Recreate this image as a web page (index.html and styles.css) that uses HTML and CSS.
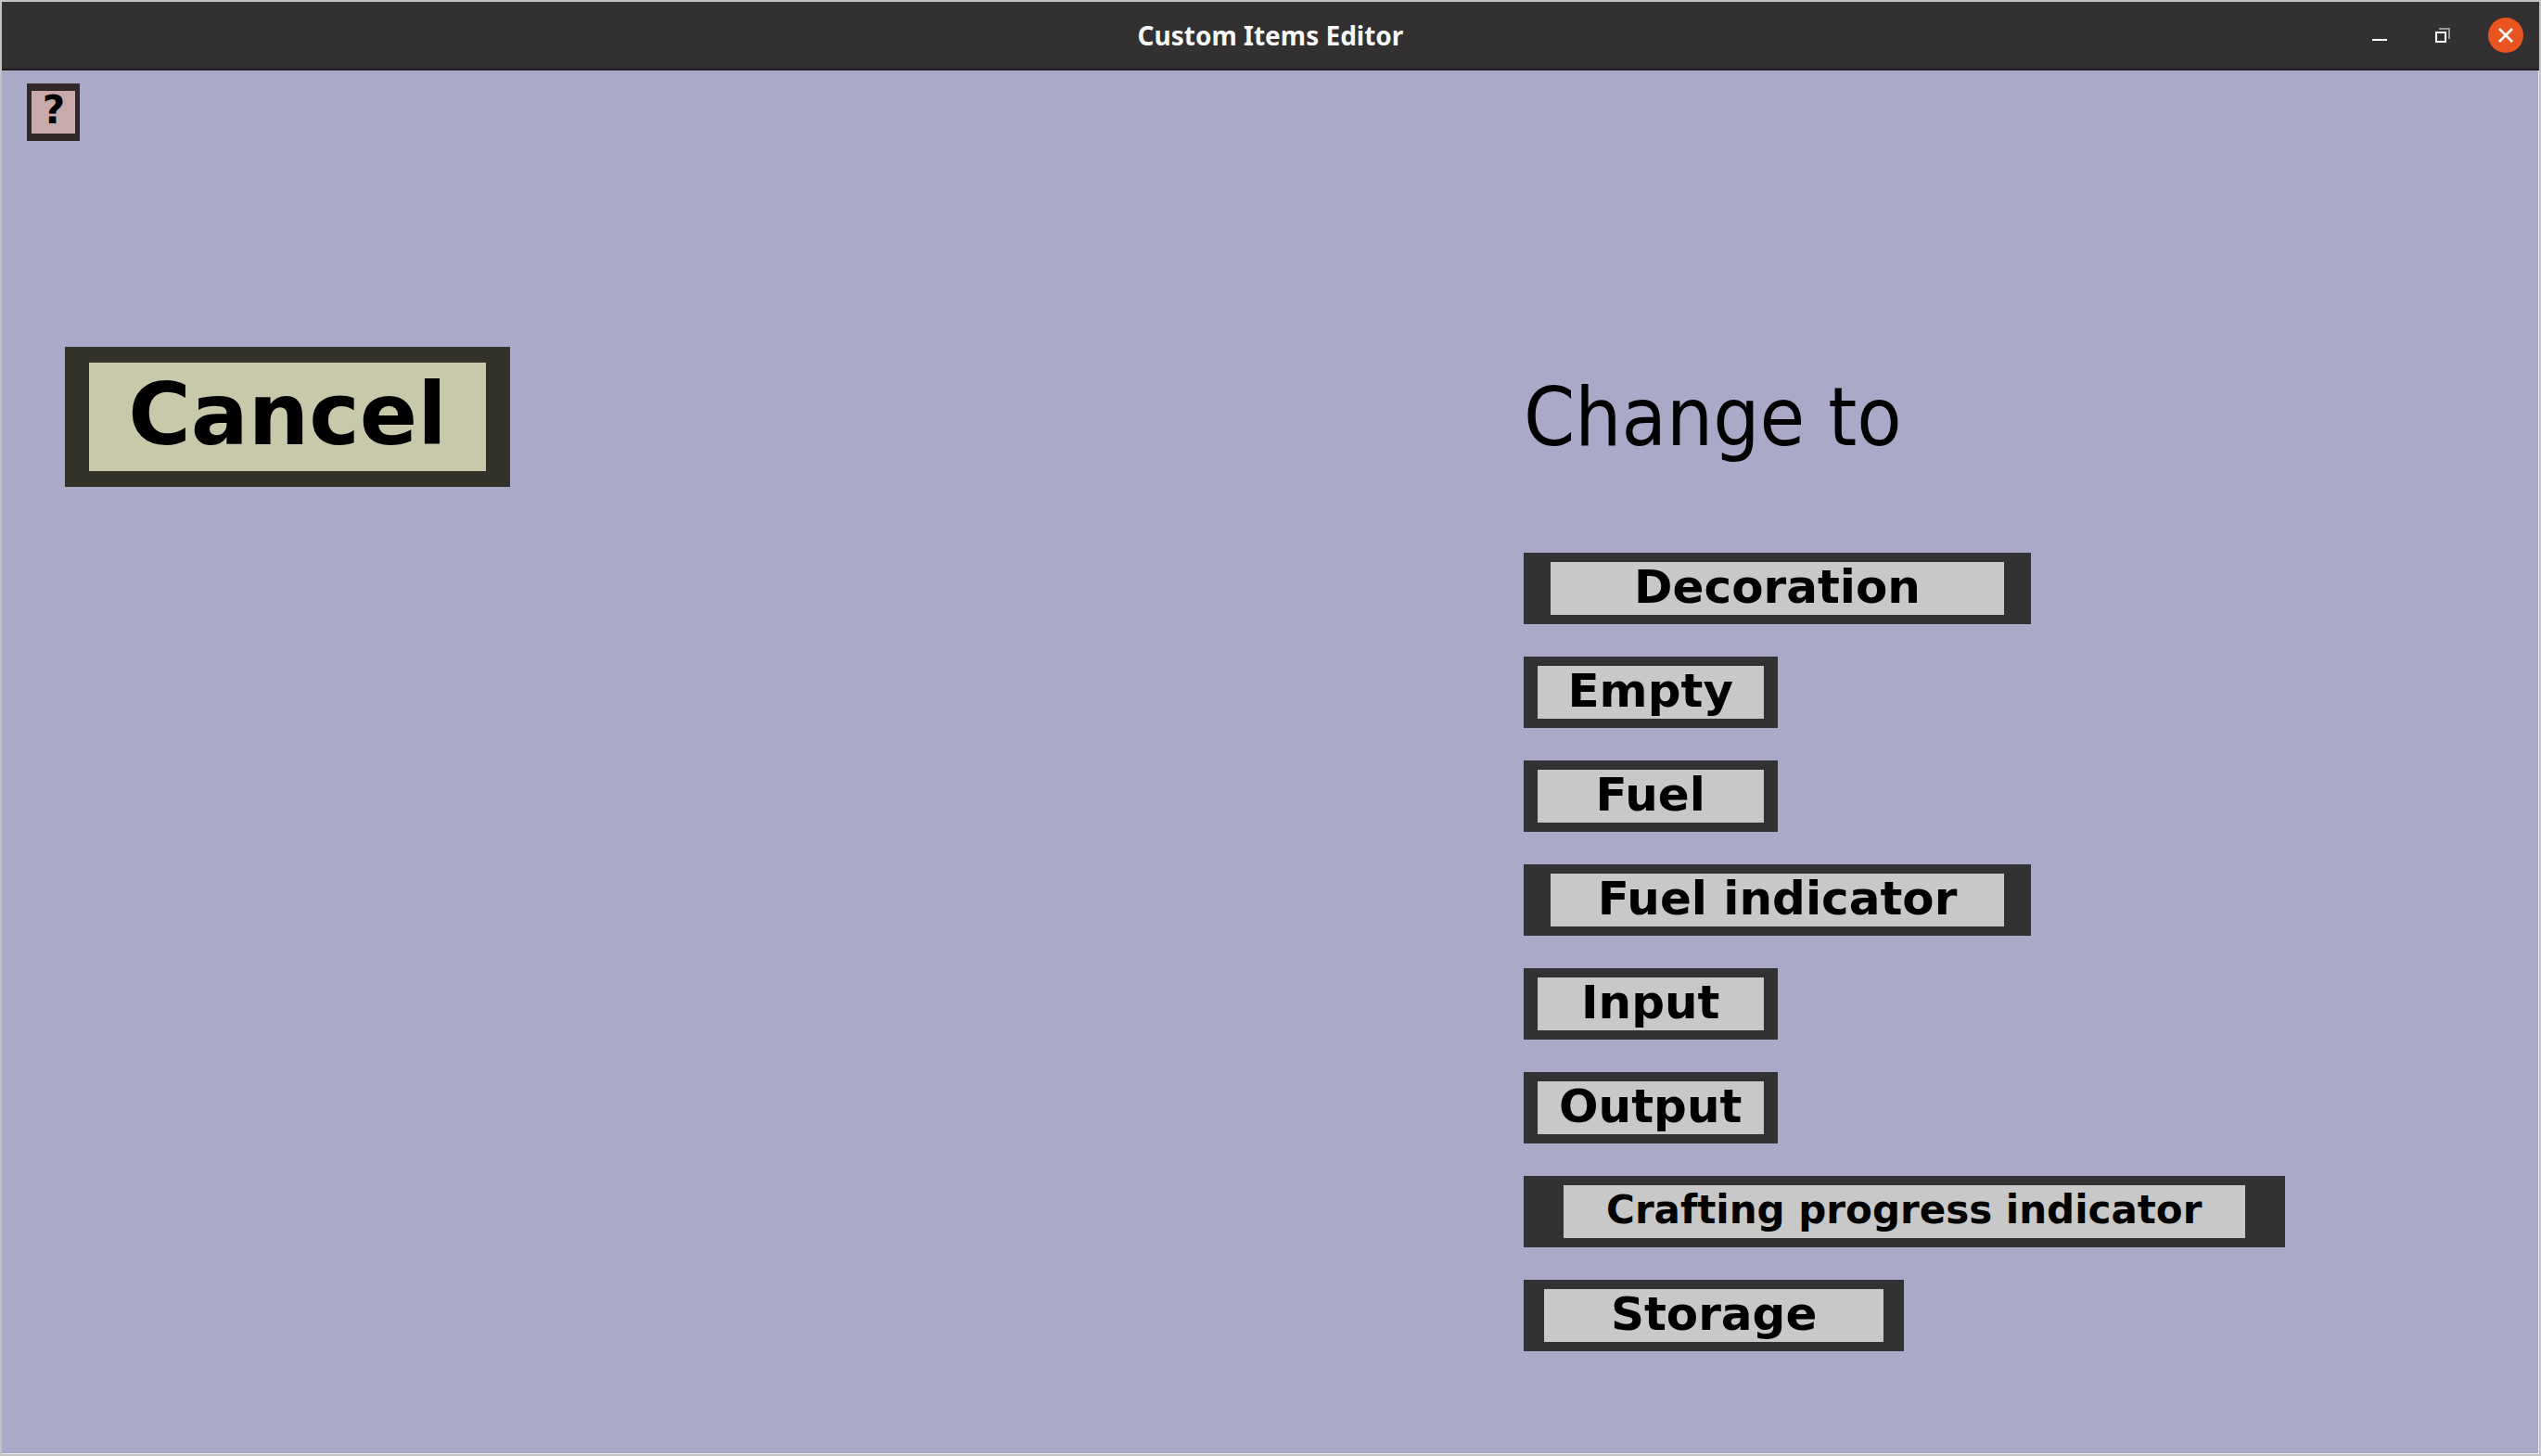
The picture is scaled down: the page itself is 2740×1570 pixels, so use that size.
FILE: index.html
```html
<!DOCTYPE html>
<html lang="en">
<head>
<meta charset="utf-8">
<title>Custom Items Editor</title>
<link rel="stylesheet" href="styles.css">
</head>
<body>
<div class="window">
  <header class="titlebar">
    <h1 class="title">Custom Items Editor</h1>
    <div class="controls">
      <button class="control" type="button" aria-label="Minimize">
        <svg viewBox="0 0 38 38"><path d="M11 23h16v2H11z" fill="#fff"/></svg>
      </button>
      <button class="control" type="button" aria-label="Restore">
        <svg viewBox="0 0 38 38"><path d="M15 11h12v12h-2V13H15z" fill="#989797"/><path d="M12 16h10v10H12z" fill="none" stroke="#fff" stroke-width="2"/></svg>
      </button>
      <button class="control" type="button" aria-label="Close">
        <svg viewBox="0 0 38 38"><circle cx="19" cy="19" r="19" fill="#e95420"/><path d="M12 12l14 14M26 12L12 26" fill="none" stroke="#fff" stroke-width="2.6"/></svg>
      </button>
    </div>
  </header>
  <main class="content">
    <button class="button help" type="button">?</button>
    <div class="menu">
      <button class="button cancel" type="button">Cancel</button>
      <section class="change">
        <h2 class="heading">Change to</h2>
        <div class="options">
          <button class="button option medium" type="button">Decoration</button>
          <button class="button option tiny" type="button">Empty</button>
          <button class="button option tiny" type="button">Fuel</button>
          <button class="button option medium" type="button">Fuel indicator</button>
          <button class="button option tiny" type="button">Input</button>
          <button class="button option tiny" type="button">Output</button>
          <button class="button option large" type="button">Crafting progress indicator</button>
          <button class="button option small" type="button">Storage</button>
        </div>
      </section>
    </div>
  </main>
</div>
</body>
</html>
```
FILE: styles.css
```css
* {
  box-sizing: border-box;
}

body {
  margin: 0;
  font-family: "DejaVu Sans", sans-serif;
  color: #000;
}

.window {
  display: flex;
  flex-direction: column;
  min-height: 100vh;
  border: 2px solid #c4c4c4;
}

.titlebar {
  display: grid;
  grid-template-columns: 1fr auto 1fr;
  align-items: center;
  height: 74px;
  padding: 0 17px;
  background: #323030;
  border-bottom: 2px solid #211e20;
}

.title {
  grid-column: 2;
  margin: 0;
  font: bold 28px/36px "Noto Sans", sans-serif;
  color: #f7f7f7;
}

.controls {
  display: flex;
  justify-content: flex-end;
  gap: 30px;
}

.control {
  width: 38px;
  height: 38px;
  padding: 0;
  border: 0;
  background: none;
}

.control svg {
  display: block;
}

.content {
  flex: 1;
  padding-top: 14px;
  background: #aaa9c8;
  border-right: 1px solid #ececf0;
  border-bottom: 1px solid #ececf0;
}

.button {
  display: block;
  padding: 0 0 4px;
  border-style: solid;
  font-family: inherit;
  font-weight: bold;
  line-height: 1;
  color: #000;
  white-space: nowrap;
}

.help {
  width: 57px;
  height: 62px;
  margin-left: 1%;
  border-width: 8px 5px;
  border-color: #322828;
  background: #c8aaaa;
  font-size: 42px;
}

.menu {
  display: grid;
  grid-template-columns: 60% 40%;
  align-items: start;
  margin-top: 222px;
}

.cancel {
  width: 480px;
  height: 151px;
  margin-left: 68px;
  border-width: 17px 26px;
  border-color: #323228;
  background: #c8c8aa;
  font-size: 92px;
}

.heading {
  margin: 0;
  font: normal 88px/151px "DejaVu Sans Condensed", "DejaVu Sans", sans-serif;
}

.options {
  display: flex;
  flex-direction: column;
  gap: 35px;
  margin-top: 71px;
}

.option {
  height: 77px;
  border-width: 10px 15px;
  border-color: #323232;
  background: #c8c8c8;
  font-size: 50px;
}

.tiny {
  width: 25%;
}

.small {
  width: calc(100% * 3 / 8);
  border-width: 10px 22px;
}

.medium {
  width: 50%;
  border-width: 10px 29px;
}

.large {
  width: 75%;
  border-width: 10px 43px;
  font-size: 42px;
}
```
